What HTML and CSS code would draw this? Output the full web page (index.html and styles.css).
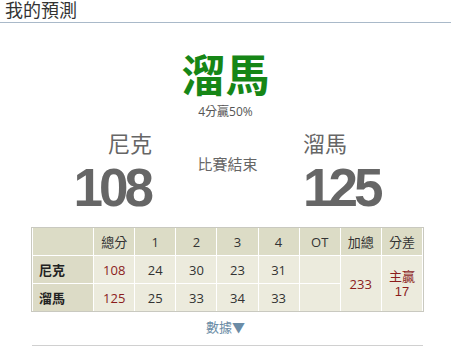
FILE: index.html
```html
<!DOCTYPE html>
<html lang="zh-Hant">
<head>
<meta charset="utf-8">
<title>我的預測</title>
<link rel="stylesheet" href="styles.css">
</head>
<body>
<div class="page">
  <div class="header">我的預測</div>
  <div class="pick">溜馬</div>
  <div class="pick-note">4分贏50%</div>
  <div class="scoreboard">
    <div class="team team-left">
      <div class="team-name">尼克</div>
      <div class="team-score">108</div>
    </div>
    <div class="status">比賽結束</div>
    <div class="team team-right">
      <div class="team-name">溜馬</div>
      <div class="team-score">125</div>
    </div>
  </div>
  <div class="box">
    <table class="stats">
      <colgroup>
        <col class="c-name">
        <col class="c-num"><col class="c-num"><col class="c-num"><col class="c-num">
        <col class="c-num"><col class="c-num"><col class="c-num"><col class="c-num">
      </colgroup>
      <tr class="head">
        <th class="name-col"></th>
        <th>總分</th>
        <th>1</th>
        <th>2</th>
        <th>3</th>
        <th>4</th>
        <th>OT</th>
        <th>加總</th>
        <th>分差</th>
      </tr>
      <tr>
        <td class="name-col">尼克</td>
        <td class="red">108</td>
        <td>24</td>
        <td>30</td>
        <td>23</td>
        <td>31</td>
        <td></td>
        <td class="red" rowspan="2">233</td>
        <td class="red diff" rowspan="2"><span class="diff-line">主贏</span><span class="diff-line">17</span></td>
      </tr>
      <tr>
        <td class="name-col">溜馬</td>
        <td class="red">125</td>
        <td>25</td>
        <td>33</td>
        <td>34</td>
        <td>33</td>
        <td></td>
      </tr>
    </table>
  </div>
  <div class="more">數據▼</div>
  <div class="rule"></div>
</div>
</body>
</html>
```
FILE: styles.css
```css
html, body {
  margin: 0;
  padding: 0;
  background: #fff;
}
body {
  font-family: "Open Sans", "Noto Sans CJK TC", sans-serif;
  color: #333;
}
.page {
  width: 451px;
}
.header {
  font-family: "Liberation Sans", "Noto Sans CJK TC", sans-serif;
  font-size: 18px;
  line-height: 18px;
  padding: 2px 0 2px 5px;
  height: 18px;
  border-bottom: 1px solid #a9b9c9;
  color: #333;
}
.pick {
  margin-top: 32px;
  text-align: center;
  font-family: "Liberation Sans", "Noto Sans CJK TC", sans-serif;
  font-size: 44px;
  line-height: 44px;
  font-weight: bold;
  color: #168616;
}
.pick-note {
  margin-top: 6px;
  text-align: center;
  font-size: 12px;
  line-height: 14px;
  color: #555;
}
.scoreboard {
  margin-top: 12px;
  display: grid;
  grid-template-columns: 152px 151px 1fr;
  color: #666;
}
.team-left {
  text-align: right;
}
.team-right {
  text-align: left;
}
.team-name {
  font-size: 22px;
  line-height: 24px;
}
.team-score {
  margin-top: 11px;
  font-family: "Liberation Sans", Arial, sans-serif;
  font-weight: bold;
  font-size: 53px;
  line-height: 44px;
  letter-spacing: -4px;
  color: #666;
}
.team-left .team-score {
  margin-right: 2px;
}
.status {
  padding-top: 24px;
  text-align: center;
  font-size: 15px;
  line-height: 18px;
  color: #666;
}
.box {
  margin: 17px 0 0 31px;
  width: 393px;
  box-sizing: border-box;
  border: 1px solid #c9c9c0;
  background: #fff;
}
.stats {
  width: 100%;
  table-layout: fixed;
  border-collapse: separate;
  border-spacing: 1px;
  margin: -1px 0;
  font-size: 13px;
  color: #333;
}
.c-name {
  width: 60px;
}
.c-num {
  width: 40px;
}
.stats th,
.stats td {
  height: 27px;
  padding: 0;
  text-align: center;
  font-weight: normal;
  background: #ecebdd;
}
.stats .head th {
  background: #dcdcc6;
}
.stats .name-col {
  text-align: left;
  padding-left: 6px;
  background: #dcdbc6;
  color: #222;
  font-weight: bold;
}
.stats .red {
  color: #8b1c1c;
}
.diff-line {
  display: block;
  font-family: "Liberation Sans", "Noto Sans CJK TC", sans-serif;
  line-height: 15px;
}
.more {
  margin-top: 7px;
  text-align: center;
  font-size: 13px;
  line-height: 16px;
  color: #6b8ca6;
}
.rule {
  margin: 10px 0 0 32px;
  width: 391px;
  border-top: 1px solid #d0d0d0;
}
```
